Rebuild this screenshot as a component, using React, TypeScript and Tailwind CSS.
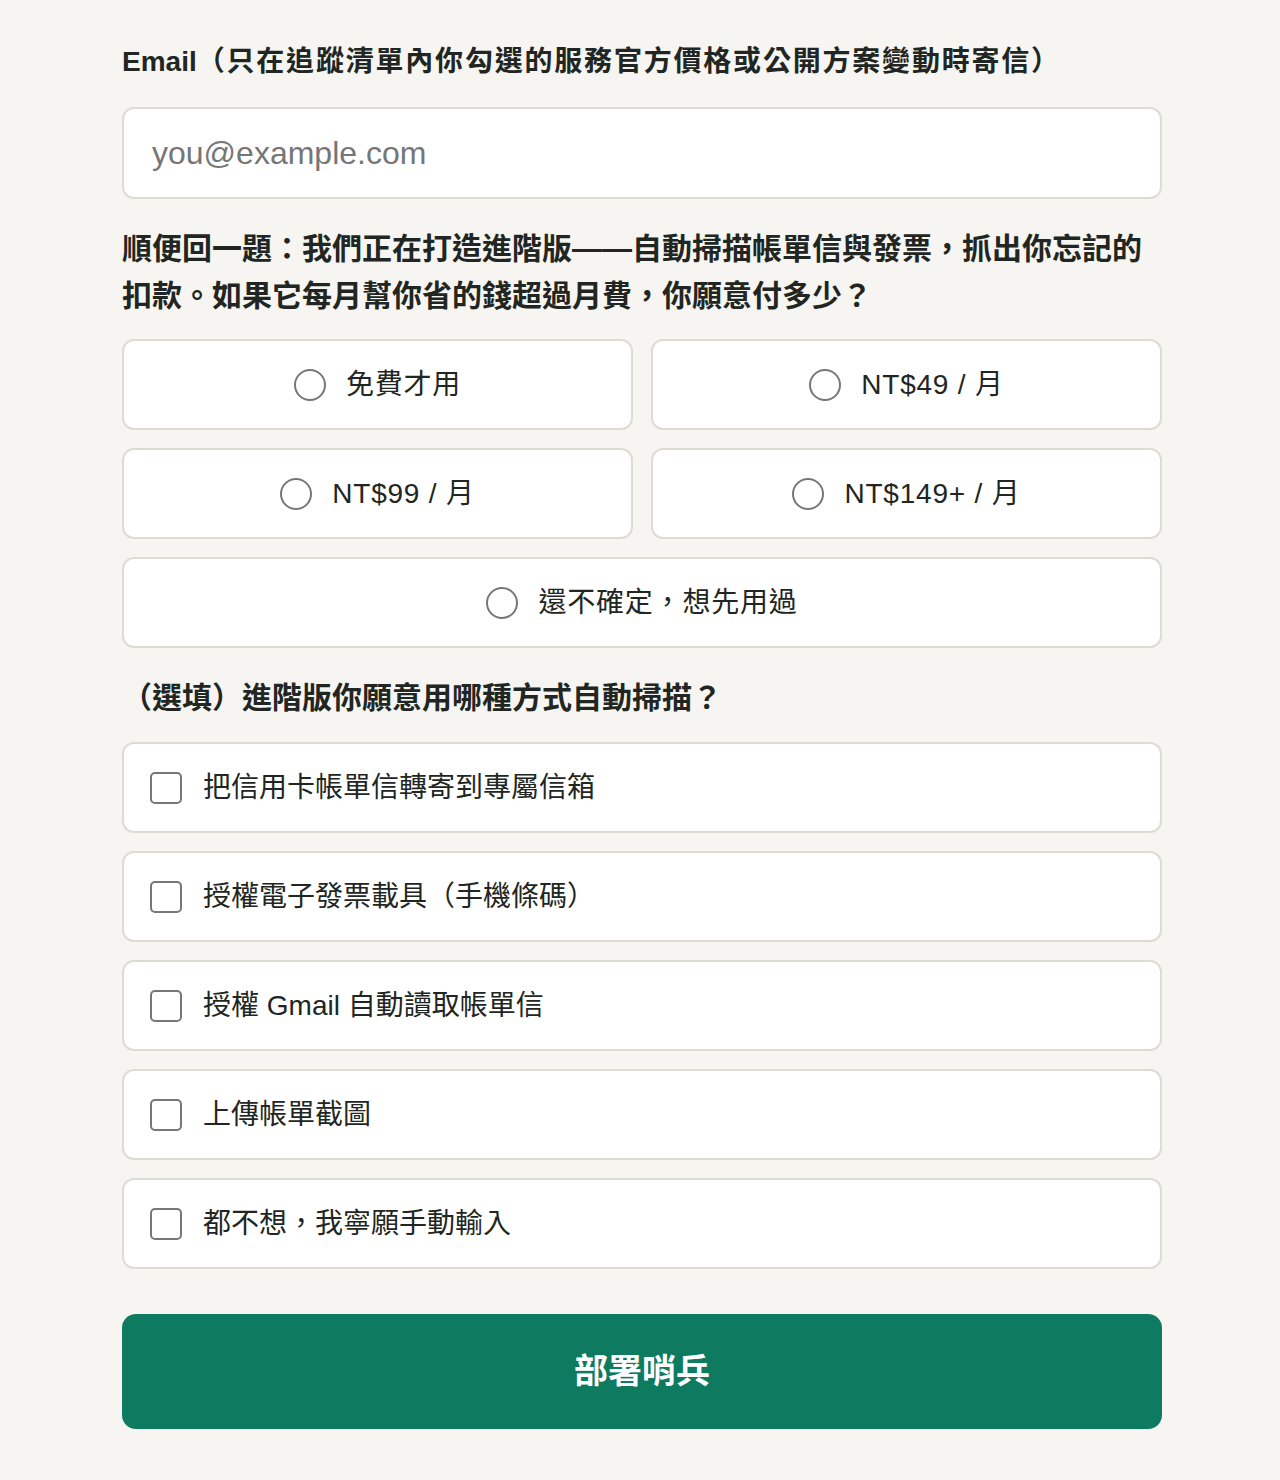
import { useState } from 'react';

const priceOptions: { value: string; label: string; wide?: boolean }[] = [
  { value: 'free', label: '免費才用' },
  { value: '49', label: 'NT$49 / 月' },
  { value: '99', label: 'NT$99 / 月' },
  { value: '149', label: 'NT$149+ / 月' },
  { value: 'unsure', label: '還不確定，想先用過', wide: true },
];

const scanMethods: { value: string; label: string }[] = [
  { value: 'forward', label: '把信用卡帳單信轉寄到專屬信箱' },
  { value: 'einvoice', label: '授權電子發票載具（手機條碼）' },
  { value: 'gmail', label: '授權 Gmail 自動讀取帳單信' },
  { value: 'upload', label: '上傳帳單截圖' },
  { value: 'manual', label: '都不想，我寧願手動輸入' },
];

const fontStack = {
  fontFamily: '"Liberation Sans", "Noto Sans CJK TC", sans-serif',
};

export default function App() {
  const [email, setEmail] = useState('');
  const [price, setPrice] = useState<string | null>(null);
  const [methods, setMethods] = useState<string[]>([]);

  const toggleMethod = (value: string) => {
    setMethods((current) =>
      current.includes(value)
        ? current.filter((m) => m !== value)
        : [...current, value]
    );
  };

  return (
    <div
      className="min-h-screen bg-[#f6f5f1] pl-[122px] pt-[41px] pb-[51px] text-[#222622]"
      style={fontStack}
    >
      <form className="w-[1040px]" onSubmit={(e) => e.preventDefault()}>
        {/* Email */}
        <label className="block text-[28px] font-bold leading-[42px]">
          Email
          <span className="tracking-[1.8px]">
            （只在追蹤清單內你勾選的服務官方價格或公開方案變動時寄信）
          </span>
        </label>
        <input
          type="email"
          value={email}
          onChange={(e) => setEmail(e.target.value)}
          placeholder="you@example.com"
          className="mt-[24px] block h-[92px] w-full rounded-[12px] border-2 border-[#dedbd3] bg-white px-[28px] text-[32px] text-[#222] outline-none placeholder:text-[#767676]"
        />

        {/* Pricing question */}
        <p className="mt-[26px] text-[30px] font-bold leading-[47px]">
          順便回一題：我們正在打造進階版——自動掃描帳單信與發票，抓出你忘記的扣款。如果它每月幫你省的錢超過月費，你願意付多少？
        </p>
        <div className="mt-[20px] grid grid-cols-2 gap-[18px]">
          {priceOptions.map(({ value, label, wide }) => (
            <OptionCard
              key={value}
              wide={wide}
              onClick={() => setPrice(value)}
            >
              <span className="flex h-[32px] w-[32px] items-center justify-center rounded-full border-2 border-[#777]">
                {price === value && (
                  <span className="h-[16px] w-[16px] rounded-full bg-[#0e7a5f]" />
                )}
              </span>
              <span className="text-[28px] leading-none tracking-[0.8px]">{label}</span>
            </OptionCard>
          ))}
        </div>

        {/* Scan method question */}
        <p className="mt-[26px] text-[30px] font-bold leading-[47px]">
          （選填）進階版你願意用哪種方式自動掃描？
        </p>
        <div className="mt-[21px] flex flex-col gap-[18px]">
          {scanMethods.map(({ value, label }) => (
            <button
              key={value}
              type="button"
              onClick={() => toggleMethod(value)}
              className="flex h-[91px] items-center gap-[21px] rounded-[12px] border-2 border-[#dedbd3] bg-white pl-[26px] text-left"
            >
              <span className="flex h-[32px] w-[32px] items-center justify-center rounded-[5px] border-2 border-[#777]">
                {methods.includes(value) && (
                  <svg viewBox="0 0 24 24" className="h-[22px] w-[22px]" fill="none" stroke="#0e7a5f" strokeWidth="3">
                    <path d="M5 12l5 5 9-10" />
                  </svg>
                )}
              </span>
              <span className="text-[28px] leading-none">{label}</span>
            </button>
          ))}
        </div>

        <button
          type="submit"
          className="mt-[45px] flex h-[115px] w-full items-center justify-center rounded-[14px] bg-[#0e7a5f] text-[34px] font-bold text-white"
        >
          部署哨兵
        </button>
      </form>
    </div>
  );
}

function OptionCard({
  wide,
  onClick,
  children,
}: {
  wide?: boolean;
  onClick: () => void;
  children: React.ReactNode;
}) {
  return (
    <button
      type="button"
      onClick={onClick}
      className={`flex h-[91px] items-center justify-center gap-[20px] rounded-[12px] border-2 border-[#dedbd3] bg-white ${
        wide ? 'col-span-2' : ''
      }`}
    >
      {children}
    </button>
  );
}
